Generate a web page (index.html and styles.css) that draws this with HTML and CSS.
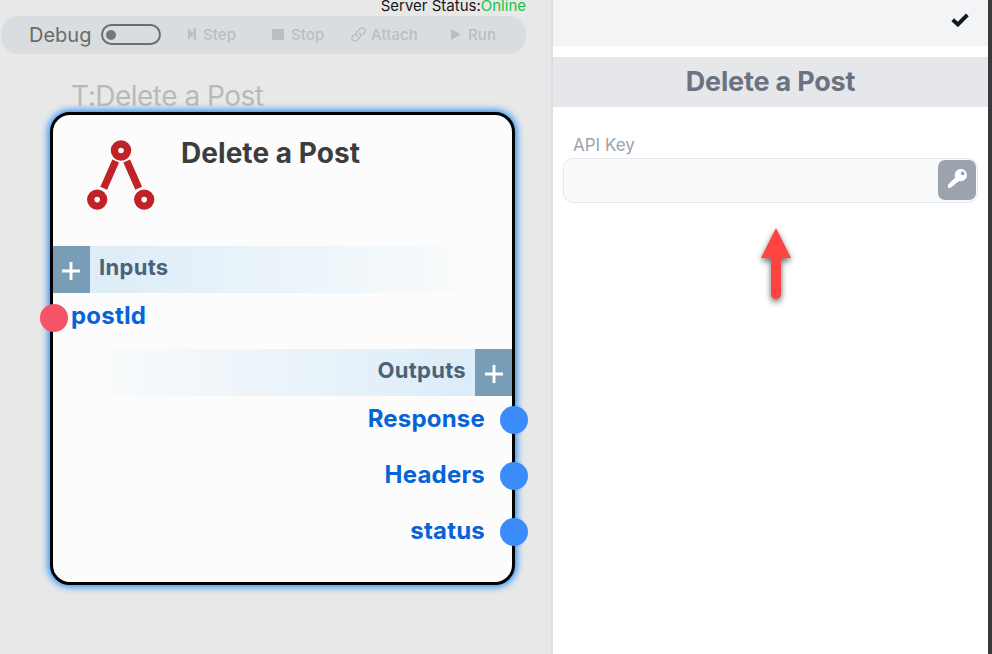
FILE: index.html
```html
<!DOCTYPE html>
<html lang="en">
<head>
<meta charset="utf-8">
<title>Delete a Post</title>
<link rel="stylesheet" href="styles.css">
</head>
<body>
<div class="app">
  <main class="canvas">
    <div class="status"><span class="status-label">Server Status:</span><span class="online">Online</span></div>
    <div class="toolbar">
      <span class="debug">Debug</span>
      <span class="toggle"><span class="knob"></span></span>
      <span class="tool step"><svg width="9" height="12" viewBox="0 0 9 12"><path d="M0 .5 5 5V.5h3v11H5V7L0 11.500z" fill="currentColor"/><path d="M5.600 0v12" stroke="#d9dddf" stroke-width=".6"/></svg><b>Step</b></span>
      <span class="tool stop"><svg width="12" height="11" viewBox="0 0 12 11"><path d="M0 0h12v11H0z" fill="currentColor"/></svg><b>Stop</b></span>
      <span class="tool attach"><svg width="15" height="15" viewBox="0 0 15 15" fill="none" stroke="currentColor" stroke-width="1.500" stroke-linecap="round"><path d="M6.300 8.900C4.900 7.500 5 5.900 6.200 4.700L8.900 1.900c1.300-1.300 3-1.300 4.200-.1s1.200 2.900 0 4.100L11.500 7.500"/><path d="M8.700 6.100c1.400 1.400 1.300 3 .1 4.200L6.100 13.100c-1.300 1.300-3 1.300-4.200.1s-1.200-2.900 0-4.100L3.500 7.500"/></svg><b>Attach</b></span>
      <span class="tool run"><svg width="10" height="11" viewBox="0 0 10 11"><path d="M0 0 10 5.500 0 11z" fill="currentColor"/></svg><b>Run</b></span>
    </div>
    <section class="node-wrap">
      <div class="node-caption"><span>T:Delete a Post</span></div>
      <div class="node">
        <header class="node-head">
          <svg class="logo" width="68" height="71" viewBox="0 0 68 71" fill="none" stroke="#bf2227"><circle cx="34" cy="10.500" r="6.500" stroke-width="7.400"/><circle cx="10.200" cy="59.600" r="6.500" stroke-width="7.400"/><circle cx="57.200" cy="59.600" r="6.500" stroke-width="7.400"/><path d="M28.700 21 16.700 48.200M39.700 21 51.700 48.200" stroke-width="7.400"/></svg>
          <h1><span>Delete a Post</span></h1>
        </header>
        <div class="band inputs"><span class="add"><svg width="18" height="18" viewBox="0 0 18 18"><path d="M9 0v18M0 9h18" stroke="#fff" stroke-width="2.900"/></svg></span><span class="band-name">Inputs</span></div>
        <div class="port in"><i class="dot"></i><span>postId</span></div>
        <div class="band outputs"><span class="band-name">Outputs</span><span class="add"><svg width="18" height="18" viewBox="0 0 18 18"><path d="M9 0v18M0 9h18" stroke="#fff" stroke-width="2.900"/></svg></span></div>
        <div class="port out"><span>Response</span><i class="dot"></i></div>
        <div class="port out"><span>Headers</span><i class="dot"></i></div>
        <div class="port out"><span>status</span><i class="dot"></i></div>
      </div>
    </section>
  </main>
  <aside class="panel">
    <div class="panel-top"><svg width="18" height="14" viewBox="0 0 18 14"><path d="M1.700 6.700 6.900 11.400 16.400 1.900" fill="none" stroke="#111827" stroke-width="4"/></svg></div>
    <h2 class="panel-title"><span>Delete a Post</span></h2>
    <form class="fields">
      <label for="key"><span>API Key</span></label>
      <div class="field"><input id="key" type="text"><button type="button" aria-label="Key"><svg width="19" height="19" viewBox="0 0 512 512"><path fill="#fff" d="M512 165c0 91-74 165-165 165-20 0-38-3-55-9l-44 47h-40v44h-44v44h-44l-44 48-76 8V424L192 232c-7-21-11-43-11-67C181 74 256 0 347 0s165 74 165 165zM345 118a50 50 0 1 0 100 0 50 50 0 0 0-100 0z"/></svg></button></div>
    </form>
    <svg class="arrow" width="50" height="90" viewBox="0 0 50 90"><path d="M25 8 40 38H30V74a5 5 0 0 1-10 0V38H10z" fill="#ff4343"/></svg>
  </aside>
</div>
</body>
</html>
```
FILE: styles.css
```css
* { box-sizing: border-box; }
body { margin: 0; font-family: Inter, "Liberation Sans", sans-serif; }
svg { display: block; flex: none; }
h1, h2 { margin: 0; }
.app { display: flex; width: 992px; height: 654px; overflow: hidden; background: #fff; }
.canvas { position: relative; width: 551px; background: #e8e8e8; }
.status { height: 16px; padding-right: 25px; text-align: right; font-size: 15px; line-height: 12px; color: #171717; white-space: nowrap; }
.online { color: #20c147; }
.toolbar { display: flex; align-items: center; width: 525px; height: 38px; margin-left: 1px; padding-left: 28px; border-radius: 17px; background: #d9dddf; white-space: nowrap; }
.debug { width: 72px; padding-bottom: 1px; font-size: 20px; line-height: 24px; color: #6a6a6a; }
.toggle { display: flex; align-items: center; width: 60px; height: 21px; margin-bottom: 1px; padding-left: 3px; border: 2px solid #6d6d6d; border-radius: 11px; }
.knob { width: 10px; height: 10px; border-radius: 50%; background: #777; }
.tool { display: flex; align-items: center; color: #bdbdbd; font-size: 15px; line-height: 18px; }
.tool svg { margin-bottom: 2px; }
.tool b { font-weight: 500; letter-spacing: .1px; }
.step { width: 84px; margin-left: 27px; gap: 6px; }
.stop { width: 79px; gap: 7px; }
.attach { width: 100px; gap: 5px; }
.run { gap: 7px; }

.node-wrap { position: absolute; left: 50px; top: 80px; width: 465px; }
.node-caption { height: 32px; padding-left: 21px; font-size: 28px; line-height: 32px; letter-spacing: -.5px; color: #b9b9b9; }
.node { height: 473px; border: 3px solid #000; border-radius: 20px; background: #fcfcfc; box-shadow: 0 0 7px 2px #238ff5; }
.node-head { display: flex; align-items: flex-start; height: 131px; padding: 25px 0 0 34px; }
.node-head h1 { margin: -1px 0 0 26px; font-size: 28px; line-height: 28px; font-weight: 700; letter-spacing: .05px; color: #3d3d3d; white-space: nowrap; }
.band { display: flex; align-items: center; height: 47px; }
.band-name { padding-bottom: 6px; font-size: 22px; line-height: 28px; font-weight: 700; letter-spacing: .3px; color: #4b6279; }
.inputs { gap: 9px; background: linear-gradient(90deg, #d9ebf8, #fcfcfc 97%); }
.outputs { justify-content: flex-end; gap: 9px; background: linear-gradient(270deg, #d9ebf8, #fcfcfc 97%); }
.add { display: flex; align-items: center; justify-content: center; width: 37px; height: 47px; padding: 3px 1px 0 0; background: #799cb7; }
.outputs .add { padding-right: 0; }
.port { display: flex; align-items: center; height: 56px; font-size: 24px; line-height: 28px; font-weight: 700; letter-spacing: .2px; color: #0763d8; }
.dot { flex: none; width: 28px; height: 28px; border-radius: 50%; background: #3c8bfa; }
.port span { margin-top: -4px; }
.in { padding-bottom: 6px; }
.in .dot { margin-left: -13px; margin-right: 3px; background: #f55367; }
.out { justify-content: flex-end; padding-bottom: 7px; }
.out .dot { margin-top: -1px; margin-left: 15px; margin-right: -16px; }

.panel { width: 441px; border-left: 2px solid #dadde1; border-right: 4px solid #3a3a3a; }
.panel-top { display: flex; justify-content: flex-end; height: 46px; padding: 13px 19px 0 0; background: #f3f4f6; }
.panel-title { height: 50px; margin-top: 11px; background: #e5e7eb; color: #6b7280; text-align: center; font-size: 27px; line-height: 49px; font-weight: 700; letter-spacing: -.2px; }
.fields { padding: 28px 10px 0; }
.fields label { display: block; height: 23px; padding-left: 10px; font-size: 17px; line-height: 21px; color: #9ca3af; }
.field { display: flex; align-items: flex-start; width: 415px; height: 45px; padding: 1px; border: 1px solid #e5e7eb; border-radius: 10px; background: #f9fafb; }
.field input { flex: 1; min-width: 0; height: 40px; border: 0; outline: 0; background: transparent; }
.field button { display: flex; justify-content: center; width: 38px; height: 40px; padding: 9px 0 0; border: 0; border-radius: 7px; background: #9ca3af; }
.arrow { margin: 17px 0 0 198px; filter: drop-shadow(0 3px 3px rgba(0, 0, 0, .6)); }
```
